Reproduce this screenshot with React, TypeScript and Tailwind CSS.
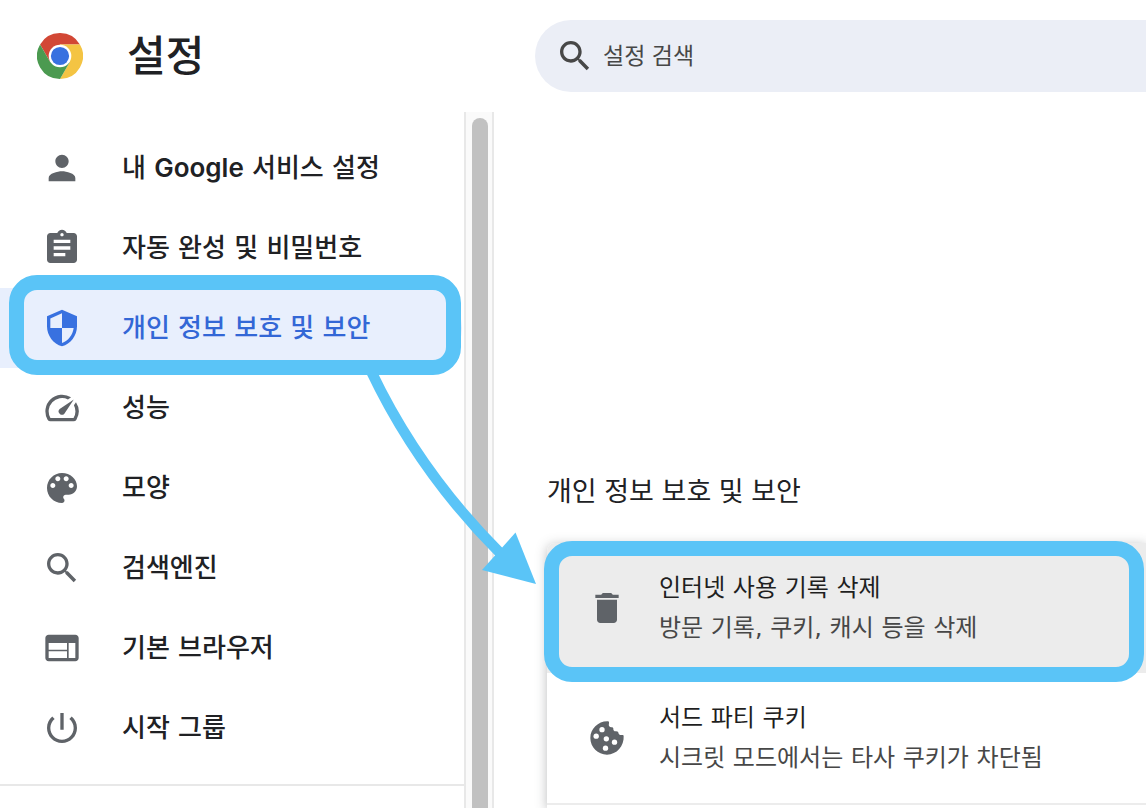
import type { ReactNode } from 'react';

const MENU_ICONS = {
  person:
    'M12 12c2.21 0 4-1.79 4-4s-1.79-4-4-4-4 1.79-4 4 1.79 4 4 4zm0 2c-2.67 0-8 1.34-8 4v2h16v-2c0-2.66-5.33-4-8-4z',
  clipboard:
    'M19 3h-4.18C14.4 1.84 13.3 1 12 1c-1.3 0-2.4.84-2.82 2H5c-1.1 0-2 .9-2 2v14c0 1.1.9 2 2 2h14c1.1 0 2-.9 2-2V5c0-1.1-.9-2-2-2zm-7 0c.55 0 1 .45 1 1s-.45 1-1 1-1-.45-1-1 .45-1 1-1zm2 14H7v-2h7v2zm3-4H7v-2h10v2zm0-4H7V7h10v2z',
  shield:
    'M12 1 3 5v6c0 5.55 3.84 10.74 9 12 5.16-1.26 9-6.45 9-12V5l-9-4zm0 10.99h7c-.53 4.12-3.28 7.79-7 8.94V12H5V6.3l7-3.11v8.8z',
  speed:
    'M20.38 8.57l-1.23 1.85a8 8 0 0 1-.22 7.58H5.07A8 8 0 0 1 15.58 6.85l1.85-1.23A10 10 0 0 0 3.35 19a2 2 0 0 0 1.72 1h13.85a2 2 0 0 0 1.74-1 10 10 0 0 0-.27-10.44zm-9.79 6.84a2 2 0 0 0 2.83 0l5.66-8.49-8.49 5.66a2 2 0 0 0 0 2.83z',
  palette:
    'M12 3c-4.97 0-9 4.03-9 9s4.03 9 9 9c.83 0 1.5-.67 1.5-1.5 0-.39-.15-.74-.39-1.01-.23-.26-.38-.61-.38-.99 0-.83.67-1.5 1.5-1.5H16c2.76 0 5-2.24 5-5 0-4.42-4.03-8-9-8zm-5.5 9c-.83 0-1.5-.67-1.5-1.5S5.67 9 6.5 9 8 9.67 8 10.5 7.33 12 6.5 12zm3-4C8.67 8 8 7.33 8 6.5S8.67 5 9.5 5s1.5.67 1.5 1.5S10.33 8 9.5 8zm5 0c-.83 0-1.5-.67-1.5-1.5S13.67 5 14.5 5s1.5.67 1.5 1.5S15.33 8 14.5 8zm3 4c-.83 0-1.5-.67-1.5-1.5S16.67 9 17.5 9s1.5.67 1.5 1.5-.67 1.5-1.5 1.5z',
  search:
    'M15.5 14h-.79l-.28-.27C15.41 12.59 16 11.11 16 9.5 16 5.91 13.09 3 9.5 3S3 5.91 3 9.5 5.91 16 9.5 16c1.61 0 3.09-.59 4.23-1.57l.27.28v.79l5 4.99L20.49 19l-4.99-5zm-6 0C7.01 14 5 11.99 5 9.5S7.01 5 9.5 5 14 7.01 14 9.5 11.99 14 9.5 14z',
  browser:
    'M20 4H4c-1.1 0-1.99.9-1.99 2L2 18c0 1.1.9 2 2 2h16c1.1 0 2-.9 2-2V6c0-1.1-.9-2-2-2zm-5 14H4v-4h11v4zm0-5H4V9h11v4zm5 5h-4V9h4v9z',
  power:
    'M13 3h-2v10h2V3zm4.83 2.17-1.42 1.42C17.99 7.86 19 9.81 19 12c0 3.87-3.13 7-7 7s-7-3.13-7-7c0-2.19 1.01-4.14 2.58-5.42L6.17 5.17C4.23 6.82 3 9.26 3 12c0 4.97 4.03 9 9 9s9-4.03 9-9c0-2.74-1.23-5.18-3.17-6.83z',
  trash:
    'M6 19c0 1.1.9 2 2 2h8c1.1 0 2-.9 2-2V7H6v12zM19 4h-3.5l-1-1h-5l-1 1H5v2h14V4z',
};

function Icon({ path, className }: { path: string; className?: string }) {
  return (
    <svg viewBox="0 0 24 24" className={`size-10 shrink-0 fill-current ${className ?? ''}`} aria-hidden="true">
      <path d={path} />
    </svg>
  );
}

function CookieIcon() {
  return (
    <svg viewBox="0 0 24 24" className="size-10 shrink-0" aria-hidden="true">
      <path
        className="fill-current"
        d="M13 2.05C7 1.6 2 6.4 2 12c0 5.5 4.500 10 10 10 5.800 0 10.400-5 10-11.300-.1-.4-.4-.6-.8-.5-1 .2-2-.1-2.200-.7-.1-1-.6-1.500-1.500-1.500-1.300.1-1.800-.6-1.700-1.700-.1-.5-.5-.8-1-.8-1.200.1-1.900-.5-1.700-1.700.1-.8.3-1.500-.1-1.750z"
      />
      <g className="fill-white">
        <circle cx="9" cy="7" r="1.600" />
        <circle cx="5.500" cy="10.900" r="1.600" />
        <circle cx="11.600" cy="12.500" r="1.600" />
        <circle cx="16.500" cy="14.500" r="1.600" />
        <circle cx="11.100" cy="18.100" r="1.600" />
      </g>
    </svg>
  );
}

function ChromeLogo() {
  const blade = 'M3.215 12A24 24 0 0 1 44.785 12H24L13.608 30Z';
  return (
    <svg viewBox="0 0 48 48" className="size-[46px] shrink-0" role="img" aria-label="Chrome">
      <path d={blade} fill="#d24735" />
      <path d={blade} fill="#f4c443" transform="rotate(120 24 24)" />
      <path d={blade} fill="#4b9a50" transform="rotate(240 24 24)" />
      <circle cx="24" cy="24" r="11.800" fill="#fff" />
      <circle cx="24" cy="24" r="9.500" fill="#3871e0" />
    </svg>
  );
}

function Highlight({ className }: { className: string }) {
  return (
    <span
      aria-hidden="true"
      className={`pointer-events-none absolute z-10 rounded-[28px] border-[15px] border-[#5ac4f7] ${className}`}
    />
  );
}

const MENU: { label: ReactNode; icon: keyof typeof MENU_ICONS; active?: boolean }[] = [
  {
    label: (
      <>
        내 <span className="font-['Inter',sans-serif] font-semibold">Google</span> 서비스 설정
      </>
    ),
    icon: 'person',
  },
  { label: '자동 완성 및 비밀번호', icon: 'clipboard' },
  { label: '개인 정보 보호 및 보안', icon: 'shield', active: true },
  { label: '성능', icon: 'speed' },
  { label: '모양', icon: 'palette' },
  { label: '검색엔진', icon: 'search' },
  { label: '기본 브라우저', icon: 'browser' },
  { label: '시작 그룹', icon: 'power' },
];

function SettingRow({
  icon,
  title,
  detail,
  className,
  children,
}: {
  icon: ReactNode;
  title: string;
  detail: string;
  className?: string;
  children?: ReactNode;
}) {
  return (
    <button
      type="button"
      className={`relative flex h-[130px] w-full shrink-0 items-center gap-8 pl-10 text-left font-['DejaVu_Sans','Noto_Sans_CJK_KR',sans-serif] text-2xl text-[#5f6368] ${className ?? ''}`}
    >
      {icon}
      <span className="flex flex-col leading-10">
        <span className="text-[#1f1f1f]">{title}</span>
        <span className="text-[#474747]">{detail}</span>
      </span>
      {children}
    </button>
  );
}

export default function App() {
  return (
    <div className="relative flex h-screen flex-col overflow-hidden bg-white font-['Inter','Noto_Sans_CJK_KR',sans-serif] text-[#202124]">
      <header className="flex h-28 shrink-0 items-center">
        <div className="flex w-[535px] shrink-0 items-center gap-11 pl-[37px]">
          <ChromeLogo />
          <h1 className="text-[42px] leading-none font-medium">설정</h1>
        </div>
        <div className="flex h-18 flex-1 items-center gap-2 rounded-l-full bg-[#ebeef6] pl-5 text-[#474747]">
          <Icon path={MENU_ICONS.search} />
          <input
            type="search"
            aria-label="설정 검색"
            placeholder="설정 검색"
            className="min-w-0 flex-1 bg-transparent text-[23px] outline-none placeholder:text-[#474747]"
          />
        </div>
      </header>

      <div className="flex min-h-0 flex-1">
        <nav className="w-[464px] shrink-0 pt-4">
          <ul className="border-b-2 border-[#e8e8e8] pb-4">
            {MENU.map(({ label, icon, active }) => (
              <li key={icon} className="relative mr-[2px]">
                <a
                  href="#"
                  aria-current={active ? 'page' : undefined}
                  className={`flex h-20 items-center gap-10 rounded-r-full pl-[42px] font-['DejaVu_Sans','Noto_Sans_CJK_KR',sans-serif] text-[26px] leading-10 font-medium ${
                    active ? 'bg-[#e8effd] text-[#3367d6]' : ''
                  }`}
                >
                  <Icon path={MENU_ICONS[icon]} className={active ? 'text-[#3871e0]' : 'text-[#5f6368]'} />
                  <span>{label}</span>
                </a>
                {active && <Highlight className="-top-[13px] right-px -bottom-[7px] left-[9px]" />}
              </li>
            ))}
          </ul>
        </nav>

        <div className="w-[30px] shrink-0 border-x-2 border-[#e8e8e8] bg-[#fafafa] pt-[6px] pr-1 pl-[6px]">
          <div className="h-full rounded-t-full bg-[#c1c1c1]" />
        </div>

        <main className="flex min-w-0 flex-1 flex-col pt-[360px] pl-[53px]">
          <h2 className="text-[27px] leading-10">개인 정보 보호 및 보안</h2>
          <section className="mt-[31px] flex flex-1 flex-col rounded-tl-lg bg-white shadow-[0_2px_12px_rgba(60,64,67,0.35)]">
            <SettingRow
              icon={<Icon path={MENU_ICONS.trash} />}
              title="인터넷 사용 기록 삭제"
              detail="방문 기록, 쿠키, 캐시 등을 삭제"
              className="rounded-tl-lg bg-[#ececec]"
            >
              <Highlight className="-top-[2px] right-[2px] -bottom-[9px] -left-[3px]" />
            </SettingRow>
            <SettingRow
              icon={<CookieIcon />}
              title="서드 파티 쿠키"
              detail="시크릿 모드에서는 타사 쿠키가 차단됨"
            />
            <div className="h-[2px] shrink-0 bg-[#ececec]" />
          </section>
        </main>
      </div>

      <svg
        viewBox="0 0 180 220"
        className="pointer-events-none absolute top-[370px] left-[360px] h-[220px] w-[180px]"
        aria-hidden="true"
      >
        <path d="M11 1Q59 102 141 184" fill="none" stroke="#5ac4f7" strokeWidth="10.500" />
        <path d="M155.500 162.500 122 200 176 214Z" fill="#5ac4f7" />
      </svg>
    </div>
  );
}
